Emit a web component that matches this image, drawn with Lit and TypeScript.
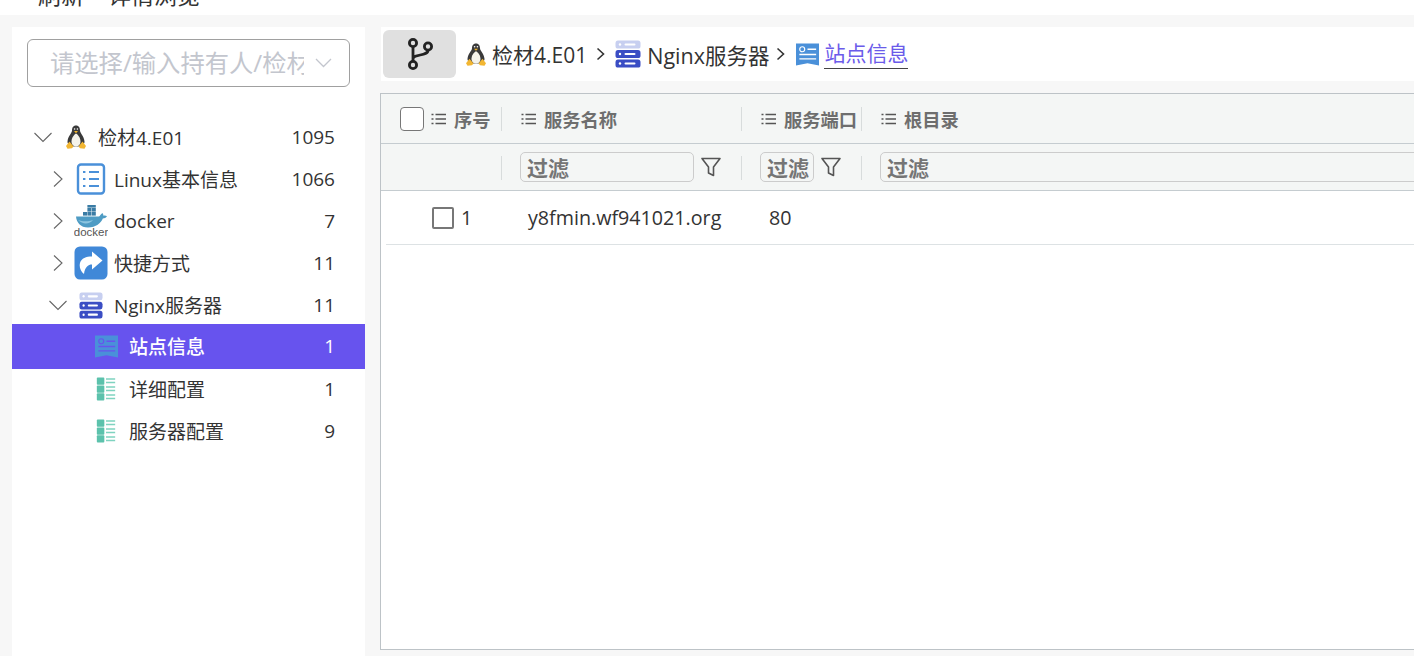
import { LitElement, html, css } from "lit";
import { customElement } from "lit/decorators.js";

const penguin = (w: number, h: number) => html`<svg width=${w} height=${h} viewBox="0 0 20 24" preserveAspectRatio="none">
  <path d="M10 0.500C7 0.500 6 3 6 5.500 6 8 2 11 1.500 16.500 1.300 19 4 21.500 10 21.500 16 21.500 18.700 19 18.500 16.500 18 11 14 8 14 5.500 14 3 13 0.500 10 0.500Z" fill="#3a3a3a"/>
  <path d="M10 8.500C7.800 9.800 5.500 13 5.500 16.500 5.500 20 7.800 21.500 10 21.500 12.200 21.500 14.500 20 14.500 16.500 14.500 13 12.200 9.800 10 8.500Z" fill="#f5f3ea"/>
  <path d="M8 6h4L10 8.200Z" fill="#f0b429"/>
  <circle cx="8.600" cy="4" r=".8" fill="#fff"/><circle cx="11.400" cy="4" r=".8" fill="#fff"/>
  <path d="M0 21 3.500 16.500 7.500 21.500 6 23.200 1.500 23.800Zm20 0L16.500 16.500 12.500 21.500 14 23.200 18.500 23.800Z" fill="#f2b632"/>
</svg>`;

const listIcon = html`<svg width="30" height="32" viewBox="0 0 30 32" fill="none" stroke="#4a90d9">
  <rect x="2" y="1.500" width="26" height="29" rx="3" stroke-width="2.400"/>
  <path d="M13 9h10M13 16h10M13 23h10" stroke-width="1.800"/>
  <path d="M7 9h2.400M7 16h2.400M7 23h2.400" stroke-width="1.800"/>
</svg>`;

const dockerIcon = html`<svg width="34" height="32" viewBox="0 0 34 32">
  <g fill="#3a7ca5">
    <rect x="9" y="7" width="4" height="3.600"/><rect x="13.400" y="7" width="4" height="3.600"/><rect x="17.800" y="7" width="4" height="3.600"/>
    <rect x="13.400" y="3" width="4" height="3.600"/><rect x="17.800" y="3" width="4" height="3.600"/><rect x="13.400" y="0" width="8.400" height="2.600"/>
  </g>
  <path d="M2 11.500H25c1-.4 1.600-2.500 3.500-3.500.6 1 1 1.800 1 2.800 1.200-.4 2.600-.2 3.500.5-1 1.700-2.600 2.200-4.200 2.200C27 18 22 22.500 14 22.500 6.500 22.500 2.500 17.500 2 11.500Z" fill="#4f9cc4"/>
  <path d="M4 15C9 17 15 16.500 19 15 16 19 9 20 4 15Z" fill="#8cc5e0"/>
  <text x="17" y="31" text-anchor="middle" font-family="Liberation Sans, sans-serif" font-size="11.500" fill="#555">docker</text>
</svg>`;

const shareIcon = html`<svg width="34" height="34" viewBox="0 0 34 34">
  <rect x="0.500" y="0.500" width="33" height="33" rx="5.500" fill="#4088d8"/>
  <path d="M18 5.500 28.500 14.500 18 23.500V18.500C14 18.500 11 21 10 28 6.500 25 5 21 6 17 7.500 12 12 10.500 18 10.500Z" fill="#fff"/>
</svg>`;

const serverIcon = (w: number, h: number) => html`<svg width=${w} height=${h} viewBox="0 0 26 26" preserveAspectRatio="none">
  <rect x="0.500" y="0.500" width="25" height="7.500" rx="2.500" fill="#c7cff0"/>
  <rect x="0.500" y="9.300" width="25" height="7.500" rx="2.500" fill="#3a4dc4"/>
  <rect x="0.500" y="18.100" width="25" height="7.500" rx="2.500" fill="#3a4dc4"/>
  <g fill="#fff"><circle cx="5" cy="4.200" r="1.200"/><circle cx="5" cy="13" r="1.200"/><circle cx="5" cy="21.800" r="1.200"/>
  <rect x="9.500" y="3.200" width="11" height="2" rx="1"/><rect x="9.500" y="12" width="11" height="2" rx="1"/><rect x="9.500" y="20.800" width="11" height="2" rx="1"/></g>
</svg>`;

const siteIcon = (w: number, h: number, line: string) => html`<svg width=${w} height=${h} viewBox="0 0 24 24" preserveAspectRatio="none">
  <path d="M0 0.500H24V23.500L12 21 0 23.500Z" fill="#4a90d9"/>
  <circle cx="6.500" cy="6.500" r="2.600" fill="none" stroke=${line} stroke-width="1.200"/>
  <path d="M12 6.500h9M3.500 12h17.500M3.500 16.500h17.500" stroke=${line} stroke-width="1.400" fill="none"/>
</svg>`;

const greenIcon = html`<svg width="20" height="24" viewBox="0 0 24 24" preserveAspectRatio="none">
  <g fill="#5cc2ac"><rect x="1" y="0.500" width="9" height="7.300" rx="1"/><rect x="1" y="8.400" width="9" height="7.300" rx="1"/><rect x="1" y="16.300" width="9" height="7.300" rx="1"/></g>
  <path d="M12 2h11M12 5.500h11M12 10h11M12 13.500h11M12 18h11M12 21.500h11" stroke="#7fd3c0" stroke-width="1.400"/>
</svg>`;

const chevRight = html`<svg width="18" height="18" viewBox="0 0 18 18" fill="none" stroke="#666" stroke-width="1.100"><path d="M5 1.500 13 9 5 16.500"/></svg>`;
const chevDown = html`<svg width="20" height="18" viewBox="0 0 20 18" fill="none" stroke="#666" stroke-width="1.100"><path d="M1.500 5 10 13.500 18.500 5"/></svg>`;

const miniList = html`<svg class="hicon" width="15" height="14" viewBox="0 0 15 14" fill="none" stroke="#555" stroke-width="1.400">
  <path d="M4.500 2.500H15M4.500 7H15M4.500 11.500H15"/><path d="M0.500 2.500h2M0.500 7h2M0.500 11.500h2"/>
</svg>`;

const funnel = html`<svg width="22" height="24" viewBox="0 0 22 24" fill="none" stroke="#555" stroke-width="1.600" stroke-linejoin="round">
  <path d="M2 3.500H20L13.500 12V20.500L8.500 18V12Z"/>
</svg>`;

const branch = html`<svg width="28" height="34" viewBox="0 0 28 34" fill="none" stroke="#222" stroke-width="2.800">
  <circle cx="7" cy="6" r="3.600"/><circle cx="7" cy="28" r="3.600"/><circle cx="22" cy="9.500" r="3.600"/>
  <path d="M7 10V24M7 22C7 17 22 19 22 13.500"/>
</svg>`;

const crumbSep = (cls: string) => html`<svg class=${cls} width="9" height="14" viewBox="0 0 9 14" fill="none" stroke="#333" stroke-width="1.600"><path d="M1.500 1.500 7.500 7 1.500 12.500"/></svg>`;

type Row = { level: number; open?: boolean; icon: unknown; label: string; count: string; selected?: boolean; leaf?: boolean };
const rows: Row[] = [
  { level: 0, open: true, icon: penguin(20, 24), label: "检材4.E01", count: "1095" },
  { level: 1, icon: listIcon, label: "Linux基本信息", count: "1066" },
  { level: 1, icon: dockerIcon, label: "docker", count: "7" },
  { level: 1, icon: shareIcon, label: "快捷方式", count: "11" },
  { level: 1, open: true, icon: serverIcon(24, 27), label: "Nginx服务器", count: "11" },
  { level: 2, leaf: true, icon: siteIcon(23, 23, "#6753ee"), label: "站点信息", count: "1", selected: true },
  { level: 2, leaf: true, icon: greenIcon, label: "详细配置", count: "1" },
  { level: 2, leaf: true, icon: greenIcon, label: "服务器配置", count: "9" },
];

@customElement("app-root")
export class AppRoot extends LitElement {
  static styles = css`
    :host { display: block; width: 1414px; height: 656px; overflow: hidden; background: #f7f7f7;
      font-family: "Open Sans", "Noto Sans CJK SC", sans-serif; color: #333; }
    * { box-sizing: border-box; }
    .top { height: 15px; background: #fff; overflow: hidden; display: flex; align-items: flex-end; padding-left: 38px; gap: 24px; font-size: 23px; line-height: 24px; color: #333; }
    .top span { flex: none; margin-bottom: 8px; }
    .body { display: flex; height: 641px; padding-top: 12px; }
    .side { width: 353px; margin-left: 12px; background: #fff; flex: none; padding-top: 12px; }
    .select { margin: 0 15px; height: 48px; border: 1px solid #a0a0a0; border-radius: 6px; display: flex; align-items: center; padding: 0 17px 0 22px; }
    .ph { flex: 1; min-width: 0; overflow: hidden; white-space: nowrap; font-size: 24.300px; color: #c3c6ce; line-height: 48px; }
    .select svg { flex: none; margin-left: 11px; }
    .tree { margin-top: 29px; }
    .row { height: 42px; display: flex; align-items: center; padding-right: 30px; font-size: 19px; color: #333; }
    .row.sel { height: 45px; margin: -2px 0 -1px; background: #6753ee; color: #fff; font-weight: 500; }
    .tog { width: 20px; flex: none; display: flex; justify-content: center; }
    .ic { width: 34px; height: 34px; flex: none; display: flex; align-items: center; justify-content: center; }
    .lv0 { padding-left: 21px; } .lv0 .ic { margin-left: 6px; } .lv0 .lab { margin-left: 5px; }
    .lv1 { padding-left: 36px; } .lv1 .ic { margin-left: 6px; } .lv1 .lab { margin-left: 6px; }
    .lv2 { padding-left: 79px; } .lv2 .lab { margin-left: 8px; } .lv2 .ic { width: 30px; margin-left: 0; }
    .lab { flex: 1; white-space: nowrap; margin-bottom: 1px; }
    .cnt { margin-bottom: 1px; }
    .main { flex: 1; min-width: 0; margin-left: 16px; display: flex; flex-direction: column; padding-bottom: 6px; }
    .crumb { height: 54px; background: #fff; display: flex; align-items: center; padding-left: 2px; font-size: 21px; color: #333; white-space: nowrap; }
    .btn { width: 73px; height: 48px; border-radius: 6px; background: #e0e0e0; display: flex; align-items: center; justify-content: center; margin-right: 10px; flex: none; }
    .crumb .c { display: flex; align-items: center; gap: 6px; }
    .crumb .big { font-size: 21.500px; }
    .sep { margin: 0 10px 0 9px; flex: none; }
    .sep2 { margin: 0 11px 0 7px; flex: none; }
    .link { color: #6b5bea; border-bottom: 1px solid #444; line-height: 29px; margin-left: -1px; }
    .grid { flex: 1; margin: 12px 0 0 -1px; background: #fff; border: 1px solid #bdc3c7; border-right: none; display: flex; flex-direction: column; }
    .head { background: #f4f6f5; }
    .hr { height: 50px; display: grid; grid-template-columns: 121px 240px 120px 1fr; border-bottom: 1px solid #c5ccd0; }
    .fr { height: 47px; display: grid; grid-template-columns: 121px 240px 120px 1fr; border-bottom: 1px solid #c5ccd0; }
    .cell { display: flex; align-items: center; min-width: 0; position: relative; }
    .hr .cell { font-size: 18.300px; font-weight: 700; color: #6e6e6e; padding-left: 19px; gap: 8px; white-space: nowrap; }
    .hr .cell.first { gap: 0; }
    .div::after { content: ""; position: absolute; right: 0; top: 13px; height: 24px; width: 1px; background: #d8dcdc; }
    .fr .div::after { top: 12px; }
    .cb { width: 24px; height: 24px; border: 1px solid #777; border-radius: 4px; background: #fff; margin-right: 7px; flex: none; }
    .hicon { flex: none; }
    .first .hicon { margin-right: 8px; }
    .fr .cell { padding-left: 18px; }
    .inp { flex: 1; min-width: 0; height: 30px; border: 1px solid #ccc; border-radius: 5px; font-size: 21px; font-weight: 700; color: #757575; line-height: 30px; padding-left: 6px; overflow: hidden; white-space: nowrap; }
    .inp.open { margin-right: -10px; }
    .fn { width: 34px; flex: none; display: flex; justify-content: center; margin-right: 14px; }
    .dr { height: 54px; margin-left: 5px; border-bottom: 1px solid #dde2e4; display: grid; grid-template-columns: 115px 240px 120px 1fr; font-size: 19.700px; color: #333; }
    .dc { display: flex; align-items: center; }
    .dcb { width: 22px; height: 22px; border: 2px solid #777; border-radius: 2px; margin: 0 7px 0 46px; flex: none; }
    .nm { padding-left: 27px; } .pt { padding-left: 28px; }
  `;

  render() {
    return html`
      <div class="top"><span>刷新</span><span>详情浏览</span></div>
      <div class="body">
        <aside class="side">
          <div class="select"><div class="ph">请选择/输入持有人/检材</div>
            <svg width="17" height="10" viewBox="0 0 17 10" fill="none" stroke="#c3c6ce" stroke-width="1.300"><path d="M1 1 8.500 8.500 16 1"/></svg>
          </div>
          <div class="tree">
            ${rows.map(r => html`
              <div class="row lv${r.level} ${r.selected ? "sel" : ""}">
                ${r.leaf ? "" : html`<span class="tog">${r.open ? chevDown : chevRight}</span>`}
                <span class="ic">${r.icon}</span>
                <span class="lab">${r.label}</span>
                <span class="cnt">${r.count}</span>
              </div>`)}
          </div>
        </aside>
        <main class="main">
          <div class="crumb">
            <div class="btn">${branch}</div>
            <span class="c">${penguin(20, 23)}检材4.E01</span>${crumbSep("sep")}
            <span class="c big">${serverIcon(26, 28)}Nginx服务器</span>${crumbSep("sep2")}
            <span class="c">${siteIcon(23, 23, "#fff")}<span class="link">站点信息</span></span>
          </div>
          <div class="grid">
            <div class="head">
              <div class="hr">
                <div class="cell first div"><span class="cb"></span>${miniList}序号</div>
                <div class="cell div">${miniList}服务名称</div>
                <div class="cell div">${miniList}服务端口</div>
                <div class="cell">${miniList}根目录</div>
              </div>
              <div class="fr">
                <div class="cell div"></div>
                <div class="cell div"><div class="inp">过滤</div><span class="fn">${funnel}</span></div>
                <div class="cell div"><div class="inp">过滤</div><span class="fn">${funnel}</span></div>
                <div class="cell"><div class="inp open">过滤</div></div>
              </div>
            </div>
            <div class="dr">
              <div class="dc"><span class="dcb"></span>1</div>
              <div class="dc nm">y8fmin.wf941021.org</div>
              <div class="dc pt">80</div>
              <div class="dc"></div>
            </div>
          </div>
        </main>
      </div>`;
  }
}
